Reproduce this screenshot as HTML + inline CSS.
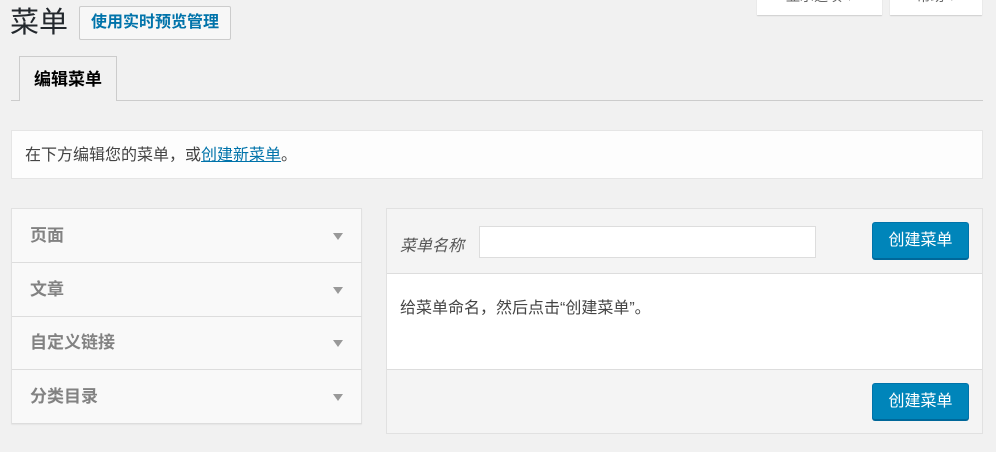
<!DOCTYPE html>
<html><head><meta charset="utf-8"><style>
*{box-sizing:border-box;margin:0;padding:0}
body{width:996px;height:452px;background:#f1f1f1;font-family:"Liberation Sans","Noto Sans CJK SC",sans-serif;position:relative;overflow:hidden;color:#444}
.a{position:absolute;white-space:nowrap}
.btn{background:#0085ba;border:1px solid #0073aa;border-bottom-color:#006799;border-radius:3px;color:#fff;font-size:16px;text-align:center;line-height:35px;box-shadow:0 1px 0 #006799}
.row{position:absolute;left:0;width:350px;height:54px;border-bottom:1px solid #ddd;font-size:17px;font-weight:bold;color:#828282;padding-left:18px;line-height:54px}
.row:after{content:"";position:absolute;right:19px;top:24px;border-left:5px solid transparent;border-right:5px solid transparent;border-top:7px solid #999}
</style></head><body>
<div class="a" style="left:757px;top:-10px;width:125px;height:25px;background:#fff;box-shadow:0 1px 1px rgba(0,0,0,.15);font-size:14px;color:#666;text-align:center;line-height:12px">显示选项 ▾</div>
<div class="a" style="left:890px;top:-10px;width:92px;height:25px;background:#fff;box-shadow:0 1px 1px rgba(0,0,0,.15);font-size:14px;color:#666;text-align:center;line-height:12px">帮助 ▾</div>
<div class="a" style="left:10px;top:4px;font-size:29px;color:#23282d;line-height:38px">菜单</div>
<div class="a" style="left:79px;top:6px;width:152px;height:34px;border:1px solid #ccc;background:#f7f7f7;border-radius:2px;color:#0073aa;font-size:16px;font-weight:bold;text-align:center;line-height:32px">使用实时预览管理</div>
<div class="a" style="left:11px;top:100px;width:972px;height:1px;background:#ccc"></div>
<div class="a" style="left:19px;top:56px;width:98px;height:45px;border:1px solid #ccc;border-bottom:none;background:#f1f1f1;font-size:17px;font-weight:bold;color:#000;text-align:center;line-height:46px">编辑菜单</div>
<div class="a" style="left:11px;top:130px;width:972px;height:49px;background:#fdfdfd;border:1px solid #e5e5e5;font-size:16px;padding-left:13px;line-height:50px">在下方编辑您的菜单，或<span style="color:#0073aa;text-decoration:underline">创建新菜单</span>。</div>
<div class="a" style="left:11px;top:208px;width:351px;height:216px;background:#f9f9f9;border:1px solid #e1e1e1;box-shadow:0 1px 1px rgba(0,0,0,.05)">
<div class="row" style="top:0">页面</div>
<div class="row" style="top:54px">文章</div>
<div class="row" style="top:107px">自定义链接</div>
<div class="row" style="top:161px">分类目录</div>
</div>
<div class="a" style="left:386px;top:208px;width:597px;height:226px;background:#f4f4f4;border:1px solid #e1e1e1">
<div class="a" style="left:13px;top:23px;font-size:16px;font-style:italic;color:#555">菜单名称</div>
<div class="a" style="left:92px;top:17px;width:337px;height:32px;background:#fff;border:1px solid #ddd"></div>
<div class="a btn" style="left:485px;top:13px;width:97px;height:37px">创建菜单</div>
<div class="a" style="left:0;top:64px;width:595px;height:97px;background:#fff;border-top:1px solid #ddd;border-bottom:1px solid #ddd;font-size:16px;padding:20px 0 0 13px">给菜单命名，然后点击“创建菜单”。</div>
<div class="a btn" style="left:485px;top:174px;width:97px;height:37px">创建菜单</div>
</div>
</body></html>
